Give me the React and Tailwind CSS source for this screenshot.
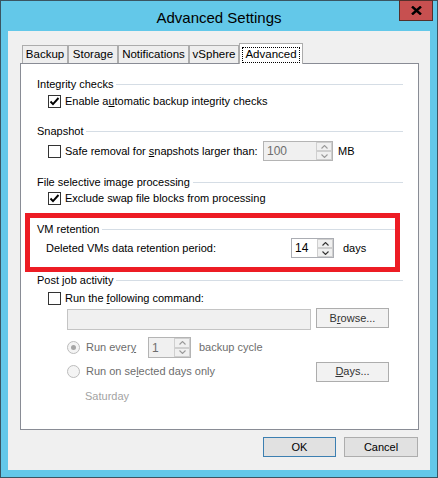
import React from "react";

const TABS = [
  { label: "Backup", w: "w-[46px]" },
  { label: "Storage", w: "w-[50px]" },
  { label: "Notifications", w: "w-[71px]" },
  { label: "vSphere", w: "w-[50px]" },
];

function Check({ checked }) {
  return (
    <div className="w-[13px] h-[13px] border border-[#333] bg-white shrink-0 flex items-center justify-center">
      {checked && (
        <svg width="11" height="11" viewBox="0 0 11 11">
          <path d="M1.5 5.5 L4 8.2 L9.5 2" fill="none" stroke="#000" strokeWidth="1.9" />
        </svg>
      )}
    </div>
  );
}

function Radio({ selected }) {
  return (
    <div className="w-[13px] h-[13px] rounded-full border border-[#bcbcbc] bg-[#f4f4f4] shrink-0 flex items-center justify-center">
      {selected && <div className="w-[5px] h-[5px] rounded-full bg-[#a6a6a6]" />}
    </div>
  );
}

function Chevron({ up, color }) {
  return (
    <svg width="7" height="4" viewBox="0 0 7 4">
      <path d={up ? "M0.5 3.5 L3.5 0.5 L6.5 3.5" : "M0.5 0.5 L3.5 3.5 L6.5 0.5"} fill="none" stroke={color} strokeWidth="1.1" />
    </svg>
  );
}

function Spinner({ value, w, h, disabled }) {
  const arrow = disabled ? "#9a9a9a" : "#333";
  return (
    <div
      className={`${w} ${h} flex border shrink-0 ${
        disabled ? "border-[#b4b4b4] bg-[#f0f0f0] text-[#6d6d6d]" : "border-[#abadb3] bg-white text-[#000]"
      }`}
    >
      <div className="flex-1 pl-[3px] flex items-center text-[12px]">{value}</div>
      <div className="w-[16px] flex flex-col">
        <div className="flex-1 border border-[#cfcfcf] bg-[#f0f0f0] flex items-center justify-center">
          <Chevron up color={arrow} />
        </div>
        <div className="flex-1 border border-[#cfcfcf] bg-[#f0f0f0] flex items-center justify-center">
          <Chevron color={arrow} />
        </div>
      </div>
    </div>
  );
}

function Header({ children, pl = "pl-[16px]", mr = "mr-[15px]" }) {
  return (
    <div className={`h-[16px] flex items-center ${pl} ${mr}`}>
      <span className="whitespace-nowrap">{children}</span>
      <div className="flex-1 h-px bg-[#d5dde5] ml-[3px]" />
    </div>
  );
}

function Btn({ children, w, dim, primary }) {
  return (
    <div
      className={`${w} h-[20px] shrink-0 flex items-center justify-center border ${
        primary ? "border-[#3c7fb1] bg-[#e1e1e1]" : dim ? "border-[#adadad] bg-[#f2f2f2] text-[#333]" : "border-[#adadad] bg-[#e1e1e1]"
      }`}
    >
      {children}
    </div>
  );
}

export default function App() {
  return (
    <div className="w-[438px] h-[478px] bg-[#63c8e9] border border-[#3a5562] relative font-['Liberation_Sans',Arial,sans-serif] text-[11px] text-black leading-none">
      {/* Title bar */}
      <div className="h-[30px] flex items-center justify-center">
        <span className="text-[15px] mt-[2px]">Advanced Settings</span>
      </div>
      <div className="absolute top-[-1px] right-[4px] w-[34px] h-[21px] bg-[#c75050] border border-[#53302c] flex items-center justify-center">
        <svg width="11" height="9" viewBox="0 0 11 9">
          <path d="M1 0.5 L10 8.5 M10 0.5 L1 8.5" stroke="#000" strokeWidth="2.4" />
        </svg>
      </div>

      {/* Client */}
      <div className="mx-[7px] h-[439px] bg-[#f0f0f0] pt-[12px]">
        {/* Tabs */}
        <div className="h-[21px] flex items-start pl-[14px]">
          {TABS.map((t) => (
            <div
              key={t.label}
              className={`${t.w} mt-[2px] h-[18px] border-l border-t border-r border-[#acacac] bg-[#eeeeee] flex items-center justify-center text-[11.5px]`}
            >
              {t.label}
            </div>
          ))}
          <div className="w-[64px] h-[21px] border-l border-t border-r border-[#acacac] bg-white relative z-10 flex items-start justify-center pt-[3px] text-[11.5px]">
            <span className="border border-dotted border-black px-[2px] py-[1px]">Advanced</span>
          </div>
        </div>

        {/* Panel */}
        <div className="-mt-px ml-[12px] w-[399px] h-[367px] border border-[#898c95] bg-white pt-[12px]">
          <Header>Integrity checks</Header>
          <div className="mt-[1px] h-[16px] flex items-center pl-[27px] gap-[4px]">
            <Check checked />
            <span className="whitespace-nowrap">
              Enable a<span className="underline">u</span>tomatic backup integrity checks
            </span>
          </div>

          <div className="mt-[14px]">
            <Header>Snapshot</Header>
          </div>
          <div className="mt-[2px] h-[20px] flex items-center pl-[27px]">
            <Check />
            <span className="w-[202px] pl-[4px] whitespace-nowrap">
              Safe removal for <span className="underline">s</span>napshots larger than:
            </span>
            <Spinner value="100" w="w-[70px]" h="h-[20px]" disabled />
            <span className="ml-[5px]">MB</span>
          </div>

          <div className="mt-[13px]">
            <Header>File selective image processing</Header>
          </div>
          <div className="h-[16px] flex items-center pl-[27px] gap-[4px]">
            <Check checked />
            <span className="whitespace-nowrap">Exclude swap file blocks from processing</span>
          </div>

          {/* VM retention (highlighted) */}
          <div className="mt-[7px] ml-[4px] w-[375px] h-[59px] border-[5px] border-[#ed1c24] pt-[3px]">
            <Header pl="pl-[7px]" mr="mr-0">VM retention</Header>
            <div className="mt-[1px] h-[20px] flex items-center pl-[16px]">
              <span className="w-[245px] whitespace-nowrap">Deleted VMs data retention period:</span>
              <Spinner value="14" w="w-[43px]" h="h-[20px]" />
              <span className="ml-[9px]">days</span>
            </div>
          </div>

          <Header>Post job activity</Header>
          <div className="mt-[2px] h-[16px] flex items-center pl-[27px] gap-[4px]">
            <Check />
            <span className="whitespace-nowrap">
              Run the <span className="underline">f</span>ollowing command:
            </span>
          </div>
          <div className="mt-[2px] h-[22px] flex items-start pl-[46px] gap-[5px]">
            <div className="mt-[1px] w-[244px] h-[21px] border border-[#c4c4c4] bg-[#f0f0f0]" />
            <Btn w="w-[73px]" dim>
              B<span className="underline">r</span>owse...
            </Btn>
          </div>
          <div className="mt-[7px] h-[21px] flex items-center pl-[46px] text-[#6d6d6d]">
            <Radio selected />
            <span className="w-[68px] pl-[6px] whitespace-nowrap">
              Run ever<span className="underline">y</span>
            </span>
            <Spinner value="1" w="w-[43px]" h="h-[21px]" disabled />
            <span className="ml-[8px] whitespace-nowrap">backup cycle</span>
          </div>
          <div className="mt-[3px] h-[21px] flex items-center pl-[46px]">
            <Radio />
            <span className="w-[236px] pl-[6px] text-[#6d6d6d] whitespace-nowrap">
              Run on se<span className="underline">l</span>ected days only
            </span>
            <Btn w="w-[73px]" dim>
              <span className="underline">D</span>ays...
            </Btn>
          </div>
          <div className="mt-[6px] h-[16px] flex items-center pl-[64px] text-[#a3a3a3]">Saturday</div>
        </div>

        {/* Dialog buttons */}
        <div className="mt-[7px] flex justify-end gap-[8px] pr-[12px]">
          <Btn w="w-[73px]" primary>OK</Btn>
          <Btn w="w-[74px]">Cancel</Btn>
        </div>
      </div>
    </div>
  );
}
